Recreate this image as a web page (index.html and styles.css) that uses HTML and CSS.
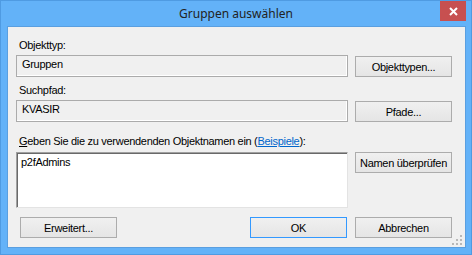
FILE: index.html
```html
<!DOCTYPE html>
<html>
<head>
    <title>Gruppen auswählen</title>
    <link rel="stylesheet" href="styles.css">
</head>
<body>
    <div class="window">
        <div class="title-bar">
            <span class="title">Gruppen auswählen</span>
            <button class="close-button" type="button">
                <svg width="9" height="9" viewBox="0 0 9 9">
                    <path d="M1 1 L8 8 M8 1 L1 8" stroke="#fff" stroke-width="2"/>
                </svg>
            </button>
        </div>
        <div class="client">
            <div class="content">
                <div class="field-label">Objekttyp:</div>
                <div class="row">
                    <div class="readonly-box">Gruppen</div>
                    <button type="button" class="win-button">Objekttypen...</button>
                </div>

                <div class="field-label second">Suchpfad:</div>
                <div class="row">
                    <div class="readonly-box">KVASIR</div>
                    <button type="button" class="win-button">Pfade...</button>
                </div>

                <div class="field-label third"><u>G</u>eben Sie die zu verwendenden Objektnamen ein (<a href="#" class="link">Beispiele</a>):</div>
                <div class="row">
                    <div class="names-box">p2fAdmins</div>
                    <button type="button" class="win-button">Namen überprüfen</button>
                </div>

                <div class="bottom-row">
                    <button type="button" class="win-button advanced">Erweitert...</button>
                    <div class="dialog-buttons">
                        <button type="button" class="win-button default">OK</button>
                        <button type="button" class="win-button">Abbrechen</button>
                    </div>
                </div>
            </div>
            <svg class="size-grip" width="10" height="10" viewBox="0 0 10 10">
                <rect x="8" y="0" width="2" height="2" fill="#b8b8b8"/>
                <rect x="4" y="4" width="2" height="2" fill="#b8b8b8"/>
                <rect x="8" y="4" width="2" height="2" fill="#b8b8b8"/>
                <rect x="0" y="8" width="2" height="2" fill="#b8b8b8"/>
                <rect x="4" y="8" width="2" height="2" fill="#b8b8b8"/>
                <rect x="8" y="8" width="2" height="2" fill="#b8b8b8"/>
            </svg>
        </div>
    </div>
</body>
</html>
```

FILE: styles.css
```css
/* Windows 8 style dialog */
body {
    margin: 0;
    font-family: "Liberation Sans", Arial, sans-serif;
    font-size: 11px;
    letter-spacing: -0.3px;
    color: #000;
}
.window {
    width: 472px;
    height: 255px;
    box-sizing: border-box;
    background-color: #63b2f8;
    border: 1px solid #4f9be2;
    display: flex;
    flex-direction: column;
}
.title-bar {
    height: 25px;
    position: relative;
    display: flex;
    justify-content: center;
}
.title {
    font-family: "Noto Sans", sans-serif;
    font-size: 12px;
    letter-spacing: 0;
    line-height: 14px;
    margin-top: 6px;
    color: #222;
}
.close-button {
    position: absolute;
    top: 0;
    right: 5px;
    width: 26px;
    height: 20px;
    border: none;
    padding: 0;
    background-color: #c75050;
    display: flex;
    align-items: center;
    justify-content: center;
}
.client {
    position: relative;
    flex: 1;
    margin: 0 5px 6px 6px;
    background-color: #f0f0f0;
    border: 1px solid #5a9fe0;
}
.content {
    padding: 12px 13px 0 8px;
}
.field-label {
    line-height: 13px;
    height: 13px;
    margin-bottom: 3px;
    padding-left: 3px;
}
.field-label.second {
    margin-top: 7px;
}
.field-label.third {
    margin-top: 13px;
    margin-bottom: 4px;
}
.link {
    color: #0066cc;
}
.row {
    display: flex;
    align-items: flex-start;
    gap: 7px;
}
.readonly-box {
    width: 332px;
    height: 22px;
    box-sizing: border-box;
    border: 1px solid #ababab;
    box-shadow: inset -1px -1px #fff;
    padding: 2px 5px;
    line-height: 13px;
}
.names-box {
    width: 332px;
    height: 56px;
    box-sizing: border-box;
    background-color: #fff;
    border: 1px solid;
    border-color: #a0a0a0 #e3e3e3 #e3e3e3 #a0a0a0;
    box-shadow: inset 1px 1px #696969;
    padding: 3px 4px;
    line-height: 13px;
}
.win-button {
    width: 97px;
    height: 21px;
    margin-top: 1px;
    box-sizing: border-box;
    border: 1px solid #acacac;
    background: linear-gradient(#f0f0f0, #e5e5e5);
    font-family: "Liberation Sans", Arial, sans-serif;
    font-size: 11px;
    letter-spacing: -0.3px;
    color: #000;
    padding: 0;
}
.row .names-box + .win-button {
    margin-top: 0;
}
.win-button.default {
    border-color: #3399ff;
}
.bottom-row {
    display: flex;
    justify-content: space-between;
    margin-top: 9px;
}
.bottom-row .win-button {
    margin-top: 0;
}
.advanced {
    margin-left: 4px;
}
.dialog-buttons {
    display: flex;
    gap: 8px;
}
.size-grip {
    position: absolute;
    right: 3px;
    bottom: 2px;
}
```
